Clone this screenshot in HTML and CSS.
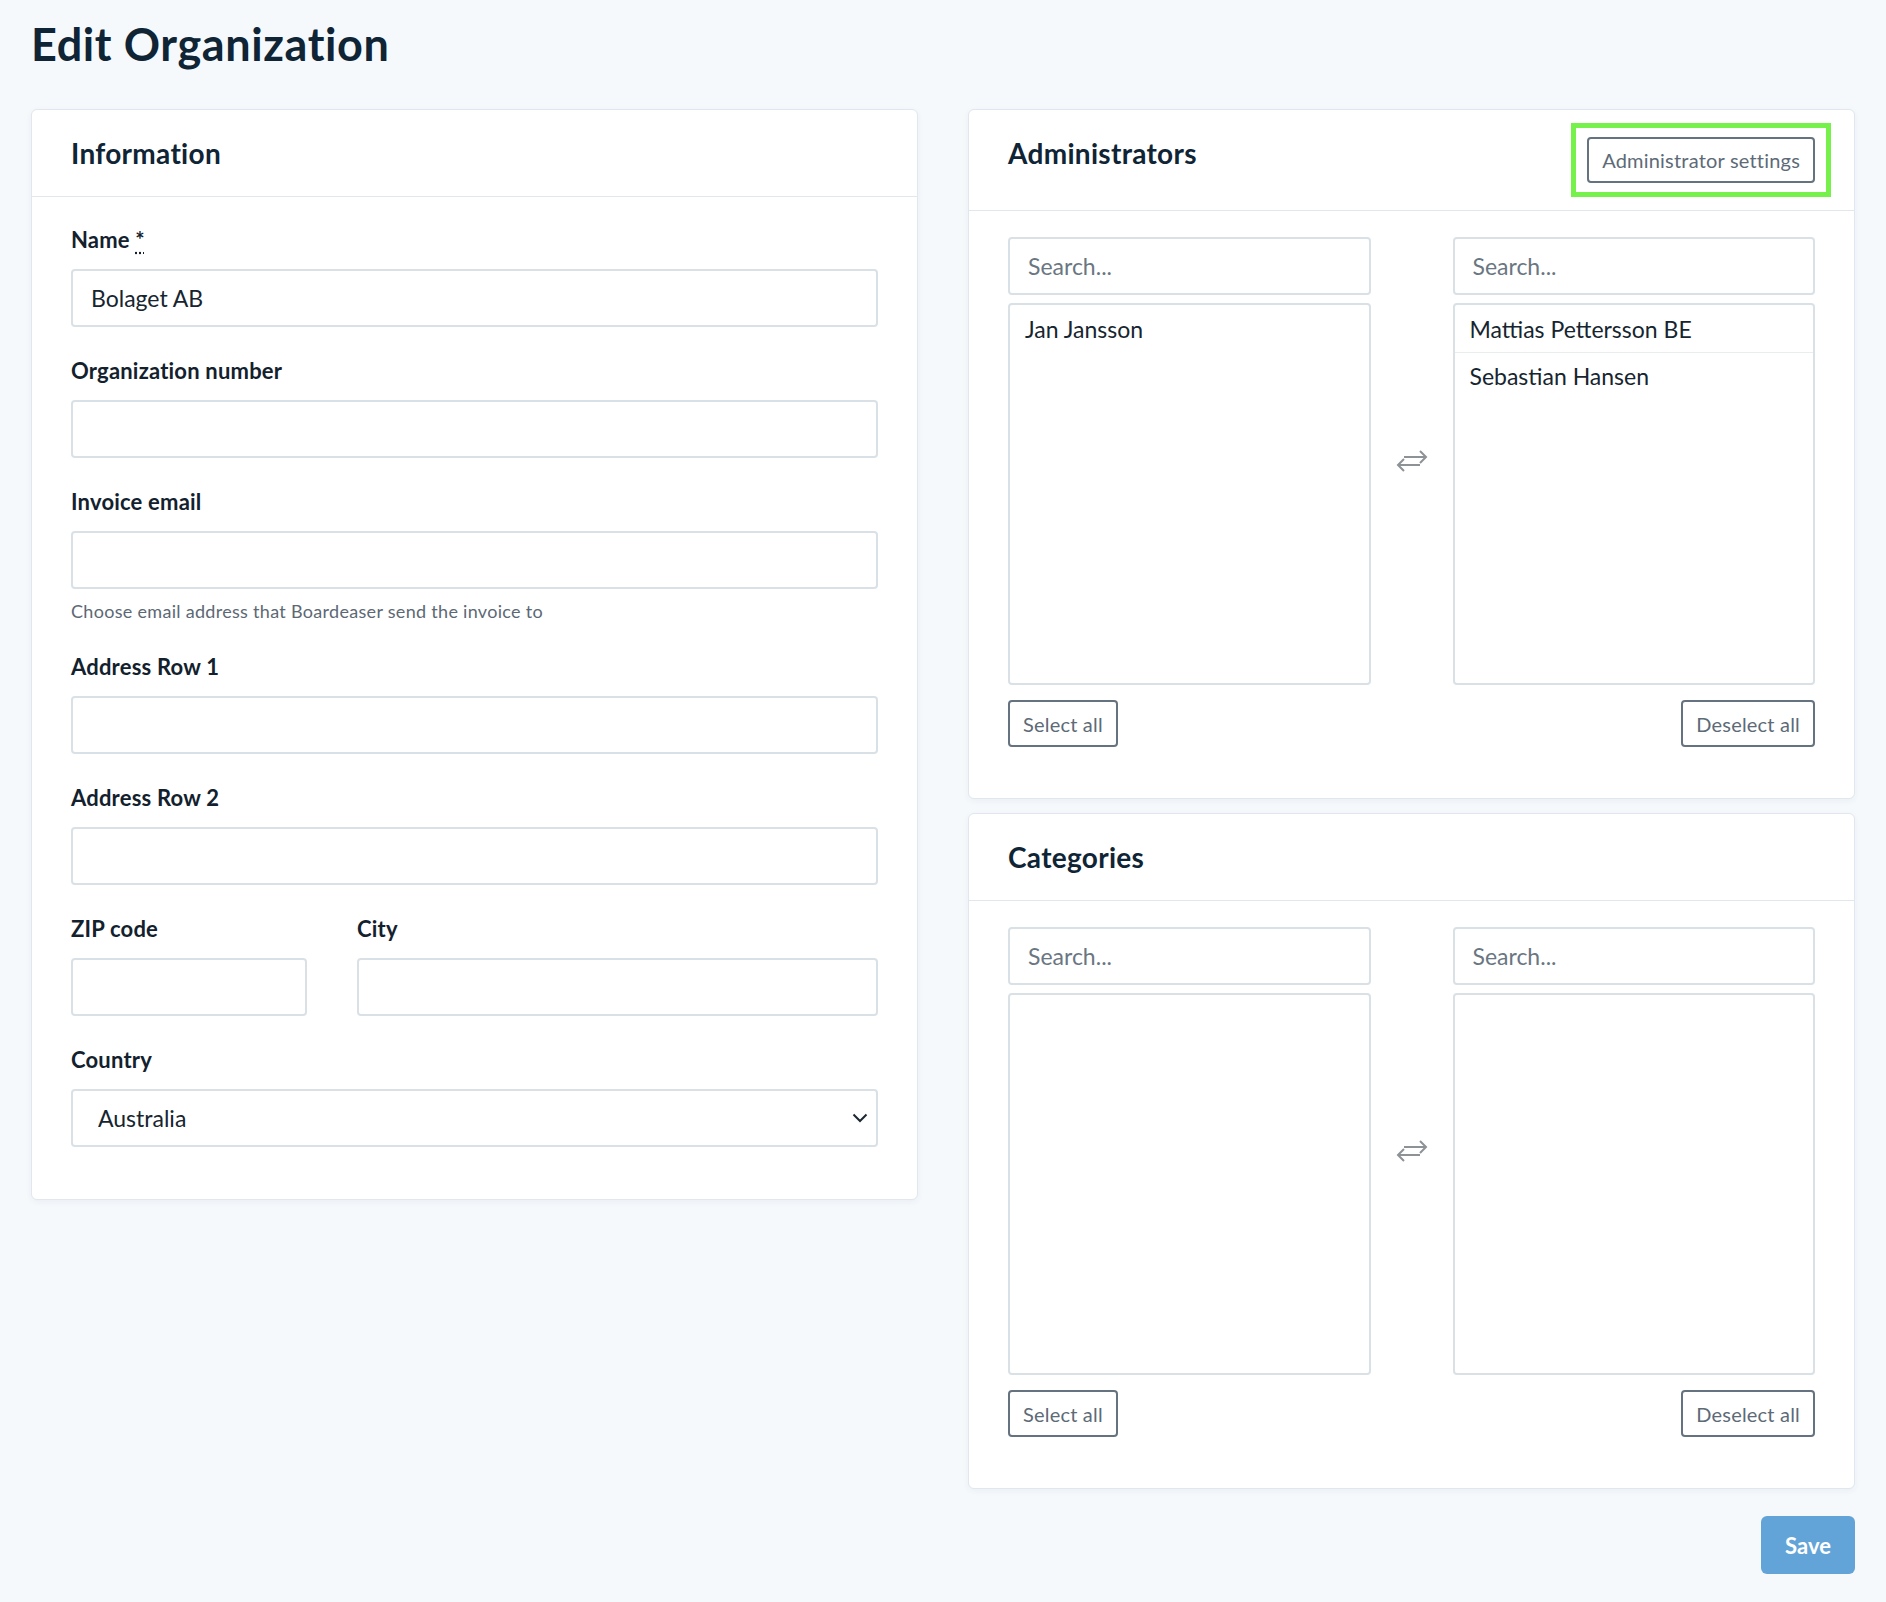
FILE: index.html
```html
<!DOCTYPE html>
<html lang="en">
<head>
  <meta charset="UTF-8" />
  <meta name="viewport" content="width=device-width, initial-scale=1.0" />
  <title>Edit Organization</title>
  <link rel="stylesheet" href="styles.css">
</head>
<body>

  <div class="page">
    <h1 class="page_title">Edit Organization</h1>

    <div class="columns">

      <section class="card">
        <div class="card_header">
          <h2>Information</h2>
        </div>
        <form class="card_body form_body">
          <div class="field">
            <label for="name">Name <abbr title="required">*</abbr></label>
            <input type="text" id="name" value="Bolaget AB" />
          </div>

          <div class="field">
            <label for="orgnr">Organization number</label>
            <input type="text" id="orgnr" />
          </div>

          <div class="field">
            <label for="invoice">Invoice email</label>
            <input type="email" id="invoice" />
            <p class="help">Choose email address that Boardeaser send the invoice to</p>
          </div>

          <div class="field">
            <label for="addr1">Address Row 1</label>
            <input type="text" id="addr1" />
          </div>

          <div class="field">
            <label for="addr2">Address Row 2</label>
            <input type="text" id="addr2" />
          </div>

          <div class="field_row">
            <div class="field">
              <label for="zip">ZIP code</label>
              <input type="text" id="zip" />
            </div>
            <div class="field">
              <label for="city">City</label>
              <input type="text" id="city" />
            </div>
          </div>

          <div class="field">
            <label for="country">Country</label>
            <div class="select_wrap">
              <select id="country">
                <option>Australia</option>
                <option>Sweden</option>
                <option>Norway</option>
              </select>
              <svg class="chevron" width="16" height="10" viewBox="0 0 16 10">
                <path d="M1.5 1.5 L8 8 L14.5 1.5" fill="none" stroke="#1b2833" stroke-width="2" />
              </svg>
            </div>
          </div>
        </form>
      </section>

      <div class="side">

        <section class="card">
          <div class="card_header">
            <h2>Administrators</h2>
            <span class="marked">
              <button type="button" class="btn btn_outline">Administrator settings</button>
            </span>
          </div>
          <div class="card_body transfer">
            <input type="text" class="search" placeholder="Search..." />
            <div class="swap">
              <svg width="36" height="24" viewBox="0 0 36 24">
                <g fill="none" stroke="#8d9296" stroke-width="2">
                  <path d="M10 8 H32 M26 2 L32 8 L26 14" />
                  <path d="M26 16 H4 M10 10 L4 16 L10 22" />
                </g>
              </svg>
            </div>
            <input type="text" class="search" placeholder="Search..." />

            <ul class="picklist">
              <li>Jan Jansson</li>
            </ul>
            <ul class="picklist">
              <li>Mattias Pettersson BE</li>
              <li>Sebastian Hansen</li>
            </ul>

            <div class="list_actions">
              <button type="button" class="btn btn_outline">Select all</button>
            </div>
            <div class="list_actions end">
              <button type="button" class="btn btn_outline">Deselect all</button>
            </div>
          </div>
        </section>

        <section class="card">
          <div class="card_header">
            <h2>Categories</h2>
          </div>
          <div class="card_body transfer">
            <input type="text" class="search" placeholder="Search..." />
            <div class="swap">
              <svg width="36" height="24" viewBox="0 0 36 24">
                <g fill="none" stroke="#8d9296" stroke-width="2">
                  <path d="M10 8 H32 M26 2 L32 8 L26 14" />
                  <path d="M26 16 H4 M10 10 L4 16 L10 22" />
                </g>
              </svg>
            </div>
            <input type="text" class="search" placeholder="Search..." />

            <ul class="picklist"></ul>
            <ul class="picklist"></ul>

            <div class="list_actions">
              <button type="button" class="btn btn_outline">Select all</button>
            </div>
            <div class="list_actions end">
              <button type="button" class="btn btn_outline">Deselect all</button>
            </div>
          </div>
        </section>

        <div class="page_actions">
          <button type="submit" class="btn btn_save">Save</button>
        </div>
      </div>

    </div>
  </div>

</body>
</html>
```

FILE: styles.css
```css
* {
  box-sizing: border-box;
}

body {
  margin: 0;
  padding: 0;
  font-family: Lato, "Noto Sans", sans-serif;
  color: #112435;
  background-color: #f5f9fc;
}

.page {
  padding: 0 31px 40px;
}

.page_title {
  margin: 0;
  padding: 18px 0 38px;
  font-size: 45px;
  line-height: 53px;
  font-weight: 700;
  letter-spacing: 0.6px;
  color: #0f2435;
}

.columns {
  display: grid;
  grid-template-columns: 1fr 1fr;
  gap: 50px;
  align-items: start;
}

.side {
  display: flex;
  flex-direction: column;
  gap: 14px;
}

/* cards */

.card {
  background-color: #fff;
  border: 1px solid #e1e7ec;
  border-radius: 6px;
  box-shadow: 0 2px 6px rgba(30, 60, 90, 0.05);
}

.card_header {
  display: flex;
  align-items: flex-start;
  justify-content: space-between;
  padding: 27px 39px;
  border-bottom: 1px solid #e1e7ec;
}

.card_header h2 {
  margin: 0;
  font-size: 28px;
  line-height: 32px;
  font-weight: 700;
  letter-spacing: 0.3px;
  color: #0f2435;
}

.card_body {
  padding: 26px 39px 51px;
}

/* form */

.form_body {
  padding: 31px 39px 20px;
}

.field {
  margin-bottom: 32px;
}

.field label {
  display: block;
  margin-bottom: 17px;
  font-size: 22px;
  line-height: 24px;
  font-weight: 700;
  letter-spacing: 0.2px;
  color: #12212d;
}

.field abbr {
  text-decoration: underline dotted;
  text-underline-offset: 4px;
  cursor: help;
}

input[type="text"],
input[type="email"],
select {
  display: block;
  width: 100%;
  height: 58px;
  padding: 0 18px;
  font-family: inherit;
  font-size: 23px;
  color: #16252f;
  background-color: #fff;
  border: 2px solid #d9e1e6;
  border-radius: 4px;
  outline: none;
}

.help {
  margin: 10px 0 0;
  font-size: 18px;
  line-height: 24px;
  letter-spacing: 0.3px;
  color: #5c6874;
}

.field_row {
  display: grid;
  grid-template-columns: 236px 1fr;
  column-gap: 50px;
}

.select_wrap {
  position: relative;
}

select {
  appearance: none;
  padding-left: 25px;
}

.chevron {
  position: absolute;
  right: 10px;
  top: 24px;
  pointer-events: none;
}

/* buttons */

.btn {
  font-family: inherit;
  cursor: pointer;
  border-radius: 4px;
}

.btn_outline {
  height: 46px;
  padding: 0 13px;
  font-size: 20px;
  letter-spacing: 0.2px;
  color: #5d6a77;
  background-color: #fff;
  border: 2px solid #65727f;
}

/* green frame drawn round the settings button, outside the header flow */
.marked {
  display: flex;
  margin: -14px -16px;
  padding: 9px 11px;
  border: 5px solid #76f04b;
}

.btn_save {
  width: 94px;
  height: 58px;
  font-size: 22px;
  font-weight: 700;
  color: #fff;
  background-color: #63a4d8;
  border: none;
  border-radius: 6px;
}

.page_actions {
  display: flex;
  justify-content: flex-end;
  margin-top: 13px;
}

/* dual list picker */

.transfer {
  display: grid;
  grid-template-columns: 1fr 82px 1fr;
}

.search {
  height: 57px;
}

.search::placeholder {
  color: #6a7682;
}

.swap {
  grid-column: 2;
  grid-row: 1 / 3;
  align-self: center;
  justify-self: center;
  display: flex;
}

.picklist {
  grid-row: 2;
  margin: 8px 0 0;
  padding: 0;
  height: 382px;
  list-style: none;
  border: 2px solid #d9e1e6;
  border-radius: 4px;
  overflow: auto;
}

.picklist:first-of-type {
  grid-column: 1;
}

.picklist:last-of-type {
  grid-column: 3;
}

.picklist li {
  height: 47px;
  padding: 0 15px;
  display: flex;
  align-items: center;
  font-size: 23px;
  color: #16252f;
}

.picklist li + li {
  border-top: 1px solid #e8edf0;
}

.list_actions {
  grid-row: 3;
  grid-column: 1;
  margin-top: 15px;
  display: flex;
}

.list_actions.end {
  grid-column: 3;
  justify-content: flex-end;
}

.list_actions .btn_outline {
  height: 47px;
  padding: 0 13px;
}
```
